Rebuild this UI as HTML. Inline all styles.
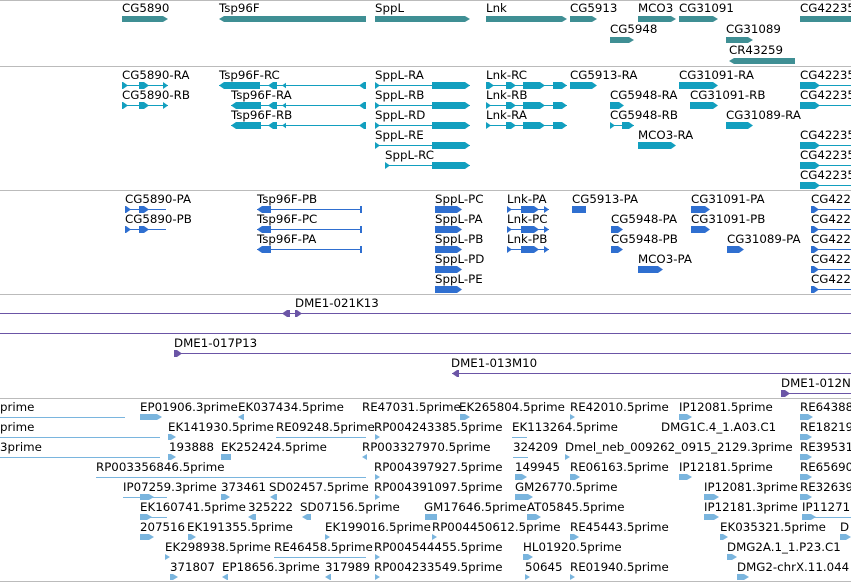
<!DOCTYPE html>
<html><head><meta charset="utf-8"><style>
body{margin:0;width:851px;height:582px;overflow:hidden;background:#fff;position:relative;font-family:"DejaVu Sans","Liberation Sans",sans-serif}
div{position:absolute}
.l{font-size:11.8px;line-height:12px;white-space:nowrap;color:#000}
.s{height:1px;background:#bbb;left:0;width:851px}
.g{height:6px;background:#3f8f94}
.t{height:1px;background:#129fbf}
.tb{height:7px;background:#129fbf}
.p{height:1px;background:#2f6fd0}
.pb{height:7px;background:#2f6fd0}
.c{height:1px;background:#6b55a6}
.cb{height:7px;background:#6b55a6}
.e{height:1px;background:#7ab5de}
.eb{height:6px;background:#7ab5de}
.r{clip-path:polygon(0 0,calc(100% - 5px) 0,100% 50%,calc(100% - 5px) 100%,0 100%)}
.lf{clip-path:polygon(5px 0,100% 0,100% 100%,5px 100%,0 50%)}
</style></head><body>
<div class="s" style="top:0"></div>
<div class="s" style="top:66px"></div>
<div class="s" style="top:190px"></div>
<div class="s" style="top:294px"></div>
<div class="s" style="top:398px"></div>
<div class="s" style="top:581px"></div>

<!-- genes -->
<div class="l" style="left:122px;top:2px">CG5890</div><div class="g r" style="left:122px;top:16px;width:46px"></div>
<div class="l" style="left:219px;top:2px">Tsp96F</div><div class="g lf" style="left:219px;top:16px;width:147px"></div>
<div class="l" style="left:375px;top:2px">SppL</div><div class="g r" style="left:375px;top:16px;width:95px"></div>
<div class="l" style="left:486px;top:2px">Lnk</div><div class="g r" style="left:486px;top:16px;width:81px"></div>
<div class="l" style="left:570px;top:2px">CG5913</div><div class="g r" style="left:570px;top:16px;width:27px"></div>
<div class="l" style="left:638px;top:2px">MCO3</div><div class="g r" style="left:638px;top:16px;width:38px"></div>
<div class="l" style="left:679px;top:2px">CG31091</div><div class="g r" style="left:679px;top:16px;width:39px"></div>
<div class="l" style="left:800px;top:2px">CG42235</div><div class="g" style="left:800px;top:16px;width:51px"></div>
<div class="l" style="left:610px;top:23px">CG5948</div><div class="g r" style="left:610px;top:37px;width:24px"></div>
<div class="l" style="left:726px;top:23px">CG31089</div><div class="g r" style="left:726px;top:37px;width:27px"></div>
<div class="l" style="left:729px;top:44px">CR43259</div><div class="g lf" style="left:729px;top:58px;width:66px"></div>

<!-- transcripts -->
<div class="l" style="left:122px;top:69px">CG5890-RA</div><div class="t" style="left:122px;top:85px;width:46px"></div><div class="tb r" style="left:122px;top:82px;width:6px"></div><div class="tb r" style="left:139px;top:82px;width:10px"></div><div class="tb r" style="left:163px;top:82px;width:5px"></div>
<div class="l" style="left:122px;top:89px">CG5890-RB</div><div class="t" style="left:122px;top:105px;width:46px"></div><div class="tb r" style="left:122px;top:102px;width:6px"></div><div class="tb r" style="left:139px;top:102px;width:10px"></div><div class="tb r" style="left:163px;top:102px;width:5px"></div>
<div class="l" style="left:219px;top:69px">Tsp96F-RC</div><div class="t" style="left:219px;top:85px;width:147px"></div><div class="tb lf" style="left:219px;top:82px;width:41px"></div><div class="tb lf" style="left:268px;top:82px;width:9px"></div><div class="tb lf" style="left:282px;top:82px;width:4px"></div><div class="tb lf" style="left:359px;top:82px;width:7px"></div>
<div class="l" style="left:231px;top:89px">Tsp96F-RA</div><div class="t" style="left:231px;top:105px;width:135px"></div><div class="tb lf" style="left:231px;top:102px;width:30px"></div><div class="tb lf" style="left:268px;top:102px;width:9px"></div><div class="tb lf" style="left:282px;top:102px;width:4px"></div><div class="tb lf" style="left:359px;top:102px;width:7px"></div>
<div class="l" style="left:231px;top:109px">Tsp96F-RB</div><div class="t" style="left:231px;top:125px;width:135px"></div><div class="tb lf" style="left:231px;top:122px;width:30px"></div><div class="tb lf" style="left:268px;top:122px;width:9px"></div><div class="tb lf" style="left:282px;top:122px;width:4px"></div><div class="tb lf" style="left:359px;top:122px;width:7px"></div>
<div class="l" style="left:375px;top:69px">SppL-RA</div><div class="t" style="left:375px;top:85px;width:95px"></div><div class="tb r" style="left:375px;top:82px;width:5px"></div><div class="tb r" style="left:432px;top:82px;width:38px"></div>
<div class="l" style="left:375px;top:89px">SppL-RB</div><div class="t" style="left:375px;top:105px;width:95px"></div><div class="tb r" style="left:375px;top:102px;width:5px"></div><div class="tb r" style="left:432px;top:102px;width:38px"></div>
<div class="l" style="left:375px;top:109px">SppL-RD</div><div class="t" style="left:375px;top:125px;width:95px"></div><div class="tb r" style="left:375px;top:122px;width:5px"></div><div class="tb r" style="left:432px;top:122px;width:38px"></div>
<div class="l" style="left:375px;top:129px">SppL-RE</div><div class="t" style="left:375px;top:145px;width:95px"></div><div class="tb r" style="left:375px;top:142px;width:5px"></div><div class="tb r" style="left:432px;top:142px;width:38px"></div>
<div class="l" style="left:385px;top:149px">SppL-RC</div><div class="t" style="left:385px;top:165px;width:85px"></div><div class="tb r" style="left:385px;top:162px;width:5px"></div><div class="tb r" style="left:432px;top:162px;width:38px"></div>
<div class="l" style="left:486px;top:69px">Lnk-RC</div><div class="t" style="left:486px;top:85px;width:81px"></div><div class="tb r" style="left:486px;top:82px;width:8px"></div><div class="tb r" style="left:506px;top:82px;width:10px"></div><div class="tb r" style="left:523px;top:82px;width:22px"></div><div class="tb r" style="left:553px;top:82px;width:14px"></div>
<div class="l" style="left:486px;top:89px">Lnk-RB</div><div class="t" style="left:486px;top:105px;width:81px"></div><div class="tb r" style="left:486px;top:102px;width:5px"></div><div class="tb r" style="left:506px;top:102px;width:10px"></div><div class="tb r" style="left:523px;top:102px;width:22px"></div><div class="tb r" style="left:553px;top:102px;width:14px"></div>
<div class="l" style="left:486px;top:109px">Lnk-RA</div><div class="t" style="left:486px;top:125px;width:81px"></div><div class="tb r" style="left:486px;top:122px;width:5px"></div><div class="tb r" style="left:506px;top:122px;width:10px"></div><div class="tb r" style="left:523px;top:122px;width:22px"></div><div class="tb r" style="left:553px;top:122px;width:14px"></div>
<div class="l" style="left:570px;top:69px">CG5913-RA</div><div class="tb r" style="left:570px;top:82px;width:27px"></div>
<div class="l" style="left:610px;top:89px">CG5948-RA</div><div class="tb r" style="left:610px;top:102px;width:14px"></div>
<div class="l" style="left:610px;top:109px">CG5948-RB</div><div class="t" style="left:610px;top:125px;width:24px"></div><div class="tb r" style="left:610px;top:122px;width:5px"></div><div class="tb r" style="left:622px;top:122px;width:12px"></div>
<div class="l" style="left:638px;top:129px">MCO3-RA</div><div class="tb r" style="left:638px;top:142px;width:38px"></div>
<div class="l" style="left:679px;top:69px">CG31091-RA</div><div class="tb r" style="left:679px;top:82px;width:39px"></div>
<div class="l" style="left:690px;top:89px">CG31091-RB</div><div class="tb r" style="left:690px;top:102px;width:28px"></div>
<div class="l" style="left:726px;top:109px">CG31089-RA</div><div class="tb r" style="left:726px;top:122px;width:27px"></div>
<div class="l" style="left:800px;top:69px">CG42235</div><div class="t" style="left:800px;top:85px;width:51px"></div><div class="tb r" style="left:800px;top:82px;width:20px"></div>
<div class="l" style="left:800px;top:89px">CG42235</div><div class="t" style="left:800px;top:105px;width:51px"></div><div class="tb r" style="left:800px;top:102px;width:20px"></div>
<div class="l" style="left:800px;top:129px">CG42235</div><div class="t" style="left:800px;top:145px;width:51px"></div><div class="tb r" style="left:800px;top:142px;width:20px"></div>
<div class="l" style="left:800px;top:149px">CG42235</div><div class="t" style="left:800px;top:165px;width:51px"></div><div class="tb r" style="left:800px;top:162px;width:20px"></div>
<div class="l" style="left:800px;top:169px">CG42235</div><div class="t" style="left:800px;top:185px;width:51px"></div><div class="tb r" style="left:800px;top:182px;width:20px"></div>

<!-- proteins -->
<div class="l" style="left:125px;top:193px">CG5890-PA</div><div class="p" style="left:125px;top:209px;width:41px"></div><div class="pb r" style="left:125px;top:206px;width:6px"></div><div class="pb r" style="left:139px;top:206px;width:10px"></div>
<div class="l" style="left:125px;top:213px">CG5890-PB</div><div class="p" style="left:125px;top:229px;width:41px"></div><div class="pb r" style="left:125px;top:226px;width:6px"></div><div class="pb r" style="left:139px;top:226px;width:10px"></div>
<div class="l" style="left:257px;top:193px">Tsp96F-PB</div><div class="p" style="left:257px;top:209px;width:105px"></div><div class="pb lf" style="left:257px;top:206px;width:14px"></div><div class="pb" style="left:360px;top:206px;width:2px"></div>
<div class="l" style="left:257px;top:213px">Tsp96F-PC</div><div class="p" style="left:257px;top:229px;width:105px"></div><div class="pb lf" style="left:257px;top:226px;width:14px"></div><div class="pb" style="left:360px;top:226px;width:2px"></div>
<div class="l" style="left:257px;top:233px">Tsp96F-PA</div><div class="p" style="left:257px;top:249px;width:105px"></div><div class="pb lf" style="left:257px;top:246px;width:14px"></div><div class="pb" style="left:360px;top:246px;width:2px"></div>
<div class="l" style="left:435px;top:193px">SppL-PC</div><div class="pb r" style="left:435px;top:206px;width:27px"></div>
<div class="l" style="left:435px;top:213px">SppL-PA</div><div class="pb r" style="left:435px;top:226px;width:27px"></div>
<div class="l" style="left:435px;top:233px">SppL-PB</div><div class="pb r" style="left:435px;top:246px;width:27px"></div>
<div class="l" style="left:435px;top:253px">SppL-PD</div><div class="pb r" style="left:435px;top:266px;width:27px"></div>
<div class="l" style="left:435px;top:273px">SppL-PE</div><div class="pb r" style="left:435px;top:286px;width:27px"></div>
<div class="l" style="left:507px;top:193px">Lnk-PA</div><div class="p" style="left:507px;top:209px;width:42px"></div><div class="pb r" style="left:507px;top:206px;width:5px"></div><div class="pb r" style="left:521px;top:206px;width:18px"></div><div class="pb r" style="left:544px;top:206px;width:5px"></div>
<div class="l" style="left:507px;top:213px">Lnk-PC</div><div class="p" style="left:507px;top:229px;width:42px"></div><div class="pb r" style="left:507px;top:226px;width:5px"></div><div class="pb r" style="left:521px;top:226px;width:18px"></div><div class="pb r" style="left:544px;top:226px;width:5px"></div>
<div class="l" style="left:507px;top:233px">Lnk-PB</div><div class="p" style="left:507px;top:249px;width:42px"></div><div class="pb r" style="left:507px;top:246px;width:5px"></div><div class="pb r" style="left:521px;top:246px;width:18px"></div><div class="pb r" style="left:544px;top:246px;width:5px"></div>
<div class="l" style="left:572px;top:193px">CG5913-PA</div><div class="pb" style="left:572px;top:206px;width:14px"></div>
<div class="l" style="left:611px;top:213px">CG5948-PA</div><div class="pb r" style="left:611px;top:226px;width:12px"></div>
<div class="l" style="left:611px;top:233px">CG5948-PB</div><div class="pb r" style="left:611px;top:246px;width:12px"></div>
<div class="l" style="left:638px;top:253px">MCO3-PA</div><div class="pb r" style="left:638px;top:266px;width:25px"></div>
<div class="l" style="left:691px;top:193px">CG31091-PA</div><div class="pb r" style="left:691px;top:206px;width:19px"></div>
<div class="l" style="left:691px;top:213px">CG31091-PB</div><div class="pb r" style="left:691px;top:226px;width:19px"></div>
<div class="l" style="left:727px;top:233px">CG31089-PA</div><div class="pb r" style="left:727px;top:246px;width:17px"></div>
<div class="l" style="left:811px;top:193px">CG4223</div><div class="p" style="left:811px;top:209px;width:40px"></div><div class="pb r" style="left:811px;top:206px;width:8px"></div>
<div class="l" style="left:811px;top:213px">CG4223</div><div class="p" style="left:811px;top:229px;width:40px"></div><div class="pb r" style="left:811px;top:226px;width:8px"></div>
<div class="l" style="left:811px;top:233px">CG4223</div><div class="p" style="left:811px;top:249px;width:40px"></div><div class="pb r" style="left:811px;top:246px;width:8px"></div>
<div class="l" style="left:811px;top:253px">CG4223</div><div class="p" style="left:811px;top:269px;width:40px"></div><div class="pb r" style="left:811px;top:266px;width:8px"></div>
<div class="l" style="left:811px;top:273px">CG4223</div><div class="p" style="left:811px;top:289px;width:40px"></div><div class="pb r" style="left:811px;top:286px;width:8px"></div>

<!-- clones -->
<div class="l" style="left:295px;top:297px">DME1-021K13</div><div class="c" style="left:0;top:313px;width:851px"></div><div class="cb lf" style="left:282px;top:310px;width:8px"></div><div class="cb r" style="left:295px;top:310px;width:7px"></div>
<div class="c" style="left:0;top:333px;width:851px"></div>
<div class="l" style="left:174px;top:337px">DME1-017P13</div><div class="c" style="left:174px;top:353px;width:677px"></div><div class="cb r" style="left:174px;top:350px;width:8px"></div>
<div class="l" style="left:451px;top:357px">DME1-013M10</div><div class="c" style="left:452px;top:373px;width:399px"></div><div class="cb lf" style="left:452px;top:370px;width:7px"></div>
<div class="l" style="left:781px;top:377px">DME1-012N</div><div class="c" style="left:781px;top:393px;width:70px"></div><div class="cb r" style="left:781px;top:390px;width:9px"></div>

<!-- ESTs -->
<div class="l" style="left:0;top:401px">prime</div><div class="e" style="left:0;top:417px;width:125px"></div>
<div class="l" style="left:140px;top:401px">EP01906.3prime</div><div class="eb r" style="left:140px;top:414px;width:22px"></div>
<div class="l" style="left:238px;top:401px">EK037434.5prime</div><div class="eb lf" style="left:238px;top:414px;width:6px"></div>
<div class="l" style="left:362px;top:401px">RE47031.5prime</div>
<div class="l" style="left:459px;top:401px">EK265804.5prime</div><div class="eb r" style="left:460px;top:414px;width:10px"></div>
<div class="l" style="left:570px;top:401px">RE42010.5prime</div><div class="eb r" style="left:570px;top:414px;width:5px"></div>
<div class="l" style="left:679px;top:401px">IP12081.5prime</div><div class="eb r" style="left:679px;top:414px;width:13px"></div>
<div class="l" style="left:800px;top:401px">RE64388</div><div class="eb r" style="left:800px;top:414px;width:13px"></div>

<div class="l" style="left:0;top:421px">prime</div><div class="e" style="left:0;top:437px;width:160px"></div><div class="eb r" style="left:168px;top:434px;width:8px"></div>
<div class="l" style="left:168px;top:421px">EK141930.5prime</div>
<div class="l" style="left:276px;top:421px">RE09248.5prime</div><div class="e" style="left:276px;top:437px;width:90px"></div>
<div class="l" style="left:374px;top:421px">RP004243385.5prime</div><div class="eb r" style="left:375px;top:434px;width:5px"></div>
<div class="l" style="left:512px;top:421px">EK113264.5prime</div><div class="e" style="left:512px;top:437px;width:15px"></div>
<div class="l" style="left:661px;top:421px">DMG1C.4_1.A03.C1</div>
<div class="l" style="left:800px;top:421px">RE18219</div><div class="eb r" style="left:800px;top:434px;width:12px"></div>

<div class="l" style="left:0;top:441px">3prime</div><div class="e" style="left:0;top:457px;width:160px"></div><div class="eb r" style="left:168px;top:454px;width:8px"></div>
<div class="l" style="left:169px;top:441px">193888</div>
<div class="l" style="left:221px;top:441px">EK252424.5prime</div><div class="eb" style="left:221px;top:454px;width:10px"></div>
<div class="l" style="left:362px;top:441px">RP003327970.5prime</div><div class="eb lf" style="left:362px;top:454px;width:5px"></div>
<div class="l" style="left:513px;top:441px">324209</div><div class="e" style="left:513px;top:457px;width:15px"></div>
<div class="l" style="left:565px;top:441px">Dmel_neb_009262_0915_2129.3prime</div><div class="eb r" style="left:565px;top:454px;width:5px"></div>
<div class="l" style="left:800px;top:441px">RE39531</div><div class="eb r" style="left:800px;top:454px;width:12px"></div>

<div class="l" style="left:96px;top:461px">RP003356846.5prime</div><div class="e" style="left:96px;top:477px;width:270px"></div>
<div class="l" style="left:374px;top:461px">RP004397927.5prime</div><div class="eb r" style="left:375px;top:474px;width:5px"></div>
<div class="l" style="left:515px;top:461px">149945</div><div class="eb r" style="left:515px;top:474px;width:12px"></div>
<div class="l" style="left:570px;top:461px">RE06163.5prime</div><div class="eb r" style="left:570px;top:474px;width:10px"></div>
<div class="l" style="left:679px;top:461px">IP12181.5prime</div><div class="eb r" style="left:679px;top:474px;width:13px"></div>
<div class="l" style="left:800px;top:461px">RE65690</div><div class="eb r" style="left:800px;top:474px;width:12px"></div>

<div class="l" style="left:123px;top:481px">IP07259.3prime</div><div class="e" style="left:123px;top:497px;width:44px"></div><div class="eb r" style="left:140px;top:494px;width:14px"></div>
<div class="l" style="left:221px;top:481px">373461</div><div class="eb r" style="left:221px;top:494px;width:9px"></div>
<div class="l" style="left:269px;top:481px">SD02457.5prime</div><div class="eb lf" style="left:270px;top:494px;width:7px"></div>
<div class="l" style="left:374px;top:481px">RP004391097.5prime</div><div class="eb r" style="left:375px;top:494px;width:5px"></div>
<div class="l" style="left:515px;top:481px">GM26770.5prime</div><div class="eb r" style="left:515px;top:494px;width:18px"></div>
<div class="l" style="left:704px;top:481px">IP12081.3prime</div><div class="eb r" style="left:704px;top:494px;width:15px"></div>
<div class="l" style="left:800px;top:481px">RE32639</div><div class="eb r" style="left:800px;top:494px;width:12px"></div>

<div class="l" style="left:140px;top:501px">EK160741.5prime</div><div class="e" style="left:140px;top:517px;width:27px"></div><div class="eb r" style="left:140px;top:514px;width:12px"></div>
<div class="l" style="left:248px;top:501px">325222</div><div class="eb lf" style="left:248px;top:514px;width:8px"></div>
<div class="l" style="left:300px;top:501px">SD07156.5prime</div><div class="eb lf" style="left:302px;top:514px;width:9px"></div>
<div class="l" style="left:424px;top:501px">GM17646.5prime</div><div class="eb" style="left:425px;top:514px;width:12px"></div>
<div class="l" style="left:527px;top:501px">AT05845.5prime</div><div class="eb r" style="left:527px;top:514px;width:14px"></div>
<div class="l" style="left:704px;top:501px">IP12181.3prime</div><div class="eb r" style="left:704px;top:514px;width:15px"></div>
<div class="l" style="left:802px;top:501px">IP11271</div><div class="e" style="left:802px;top:517px;width:49px"></div><div class="eb r" style="left:802px;top:514px;width:14px"></div>

<div class="l" style="left:140px;top:521px">207516</div><div class="eb r" style="left:140px;top:534px;width:14px"></div>
<div class="l" style="left:187px;top:521px">EK191355.5prime</div><div class="eb r" style="left:188px;top:534px;width:8px"></div>
<div class="l" style="left:325px;top:521px">EK199016.5prime</div><div class="eb r" style="left:325px;top:534px;width:5px"></div>
<div class="l" style="left:432px;top:521px">RP004450612.5prime</div><div class="eb r" style="left:432px;top:534px;width:5px"></div>
<div class="l" style="left:570px;top:521px">RE45443.5prime</div><div class="eb r" style="left:570px;top:534px;width:9px"></div>
<div class="l" style="left:720px;top:521px">EK035321.5prime</div><div class="eb r" style="left:720px;top:534px;width:8px"></div>
<div class="l" style="left:840px;top:521px">D</div><div class="eb r" style="left:840px;top:534px;width:11px"></div>

<div class="l" style="left:165px;top:541px">EK298938.5prime</div><div class="eb r" style="left:165px;top:554px;width:5px"></div>
<div class="l" style="left:274px;top:541px">RE46458.5prime</div><div class="e" style="left:274px;top:557px;width:92px"></div>
<div class="l" style="left:374px;top:541px">RP004544455.5prime</div><div class="eb r" style="left:375px;top:554px;width:5px"></div>
<div class="l" style="left:523px;top:541px">HL01920.5prime</div><div class="eb r" style="left:523px;top:554px;width:10px"></div>
<div class="l" style="left:727px;top:541px">DMG2A.1_1.P23.C1</div><div class="eb r" style="left:727px;top:554px;width:10px"></div>

<div class="l" style="left:170px;top:561px">371807</div><div class="eb r" style="left:170px;top:574px;width:8px"></div>
<div class="l" style="left:222px;top:561px">EP18656.3prime</div><div class="eb lf" style="left:222px;top:574px;width:6px"></div>
<div class="l" style="left:325px;top:561px">317989</div><div class="eb lf" style="left:325px;top:574px;width:6px"></div>
<div class="l" style="left:374px;top:561px">RP004233549.5prime</div><div class="eb r" style="left:375px;top:574px;width:5px"></div>
<div class="l" style="left:525px;top:561px">50645</div><div class="eb r" style="left:525px;top:574px;width:5px"></div>
<div class="l" style="left:570px;top:561px">RE01940.5prime</div><div class="eb r" style="left:570px;top:574px;width:5px"></div>
<div class="l" style="left:737px;top:561px">DMG2-chrX.11.044</div><div class="eb r" style="left:737px;top:574px;width:12px"></div>
</body></html>
